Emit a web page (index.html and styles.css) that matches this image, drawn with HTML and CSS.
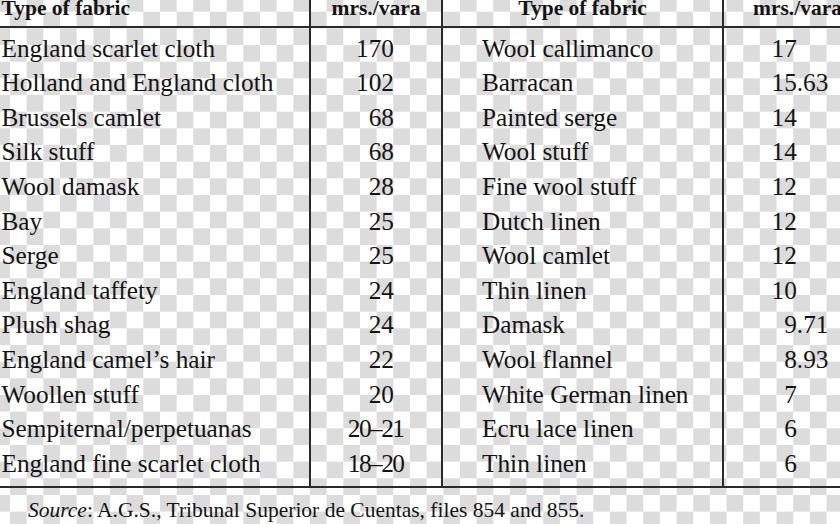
FILE: index.html
```html
<!DOCTYPE html>
<html lang="en">
<head>
<meta charset="utf-8">
<title>Prices of fabrics</title>
<link rel="stylesheet" href="styles.css">
</head>
<body>
<div class="page">
  <div class="grid" role="table">
    <div class="row head" role="row">
      <div class="c c1" role="columnheader">Type of fabric</div>
      <div class="c c2" role="columnheader">mrs./vara</div>
      <div class="c c3" role="columnheader">Type of fabric</div>
      <div class="c c4" role="columnheader">mrs./vara</div>
    </div>
    <div class="row first" role="row">
      <div class="c c1">England scarlet cloth</div><div class="c c2">170</div>
      <div class="c c3">Wool callimanco</div><div class="c c4">17</div>
    </div>
    <div class="row" role="row">
      <div class="c c1">Holland and England cloth</div><div class="c c2">102</div>
      <div class="c c3">Barracan</div><div class="c c4">15.63</div>
    </div>
    <div class="row" role="row">
      <div class="c c1">Brussels camlet</div><div class="c c2">68</div>
      <div class="c c3">Painted serge</div><div class="c c4">14</div>
    </div>
    <div class="row" role="row">
      <div class="c c1">Silk stuff</div><div class="c c2">68</div>
      <div class="c c3">Wool stuff</div><div class="c c4">14</div>
    </div>
    <div class="row" role="row">
      <div class="c c1">Wool damask</div><div class="c c2">28</div>
      <div class="c c3">Fine wool stuff</div><div class="c c4">12</div>
    </div>
    <div class="row" role="row">
      <div class="c c1">Bay</div><div class="c c2">25</div>
      <div class="c c3">Dutch linen</div><div class="c c4">12</div>
    </div>
    <div class="row" role="row">
      <div class="c c1">Serge</div><div class="c c2">25</div>
      <div class="c c3">Wool camlet</div><div class="c c4">12</div>
    </div>
    <div class="row" role="row">
      <div class="c c1">England taffety</div><div class="c c2">24</div>
      <div class="c c3">Thin linen</div><div class="c c4">10</div>
    </div>
    <div class="row" role="row">
      <div class="c c1">Plush shag</div><div class="c c2">24</div>
      <div class="c c3">Damask</div><div class="c c4 one">9.71</div>
    </div>
    <div class="row" role="row">
      <div class="c c1">England camel’s hair</div><div class="c c2">22</div>
      <div class="c c3">Wool flannel</div><div class="c c4 one">8.93</div>
    </div>
    <div class="row" role="row">
      <div class="c c1">Woollen stuff</div><div class="c c2">20</div>
      <div class="c c3">White German linen</div><div class="c c4 one">7</div>
    </div>
    <div class="row" role="row">
      <div class="c c1">Sempiternal/perpetuanas</div><div class="c c2 range">20–21</div>
      <div class="c c3">Ecru lace linen</div><div class="c c4 one">6</div>
    </div>
    <div class="row last" role="row">
      <div class="c c1">England fine scarlet cloth</div><div class="c c2 range">18–20</div>
      <div class="c c3">Thin linen</div><div class="c c4 one">6</div>
    </div>
  </div>
  <p class="source"><em>Source</em>: A.G.S., Tribunal Superior de Cuentas, files 854 and 855.</p>
</div>
</body>
</html>
```

FILE: styles.css
```css
html, body {
  margin: 0;
  padding: 0;
  overflow: hidden;
}

html {
  background-color: #ffffff;
  background-image: repeating-conic-gradient(#ffffff 0 25%, #dcdcdc 0 50%);
  background-size: 33.333px 33.333px;
  background-position: -6.667px -4.97px;
}

body {
  width: 840px;
  height: 524px;
  color: #141414;
  font-family: "Liberation Serif", "Times New Roman", serif;
}

.page {
  width: 840px;
}

.grid {
  display: grid;
  grid-template-columns: 311px 132px 281px 116px;
}

.row {
  display: contents;
}

.c {
  box-sizing: border-box;
  white-space: nowrap;
  font-size: 25.3px;
  line-height: 34.6px;
}

.c1, .c2, .c3 {
  border-right: 2px solid #2a2a2a;
}

/* header */
.head .c {
  font-size: 21.5px;
  font-weight: bold;
  line-height: 16px;
  padding-bottom: 10px;
  border-bottom: 2px solid #2a2a2a;
}

.head .c1 {
  padding-left: 1.5px;
}

.head .c2,
.head .c3 {
  text-align: center;
  padding-left: 0;
  padding-right: 0;
}

.head .c4 {
  padding-left: 29px;
}

/* body cells */
.c1 {
  padding-left: 1.5px;
}

.c2 {
  text-align: right;
  padding-right: 47px;
}

.c2.range {
  padding-right: 37.5px;
  letter-spacing: -1.5px;
}

.c3 {
  padding-left: 39px;
}

.c4 {
  padding-left: 47.5px;
}

.c4.one {
  padding-left: 60.2px;
}

.first .c {
  padding-top: 2.7px;
}

.last .c {
  padding-bottom: 5.5px;
  border-bottom: 2px solid #2a2a2a;
}

.source {
  margin: 9.7px 0 0;
  padding-left: 28px;
  font-size: 21.5px;
  line-height: 24px;
  white-space: nowrap;
}

.source em {
  font-style: italic;
}
```
